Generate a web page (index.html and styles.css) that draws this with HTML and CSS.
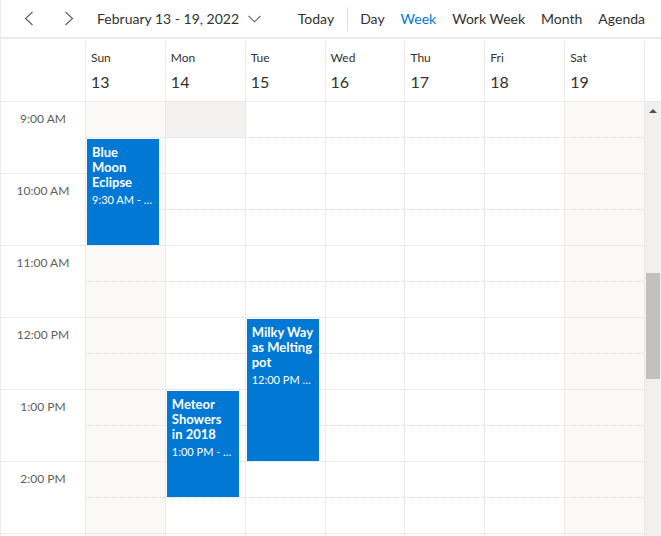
FILE: index.html
```html
<!DOCTYPE html>
<html lang="en">
<head>
<meta charset="utf-8">
<title>Scheduler - Week</title>
<link rel="stylesheet" href="styles.css">
</head>
<body>
<div class="scheduler">
  <div class="toolbar">
    <button class="nav-btn" aria-label="Previous">
      <svg width="10" height="15" viewBox="0 0 10 15"><polyline points="8.5,1 1.5,7.5 8.5,14" /></svg>
    </button>
    <button class="nav-btn" aria-label="Next">
      <svg width="10" height="15" viewBox="0 0 10 15"><polyline points="1.5,1 8.5,7.5 1.5,14" /></svg>
    </button>
    <button class="date-range">
      <span>February 13 - 19, 2022</span>
      <svg width="13" height="8" viewBox="0 0 13 8"><polyline points="0.5,0.8 6.5,6.8 12.5,0.8" /></svg>
    </button>
    <div class="spacer"></div>
    <button class="tb-item">Today</button>
    <div class="sep"></div>
    <div class="views">
      <button class="tb-item">Day</button>
      <button class="tb-item active">Week</button>
      <button class="tb-item">Work Week</button>
      <button class="tb-item">Month</button>
      <button class="tb-item">Agenda</button>
    </div>
  </div>

  <div class="header-row">
    <div class="corner"></div>
    <div class="day-head"><div class="dname">Sun</div><div class="dnum">13</div></div>
    <div class="day-head"><div class="dname">Mon</div><div class="dnum">14</div></div>
    <div class="day-head"><div class="dname">Tue</div><div class="dnum">15</div></div>
    <div class="day-head"><div class="dname">Wed</div><div class="dnum">16</div></div>
    <div class="day-head"><div class="dname">Thu</div><div class="dnum">17</div></div>
    <div class="day-head"><div class="dname">Fri</div><div class="dnum">18</div></div>
    <div class="day-head"><div class="dname">Sat</div><div class="dnum">19</div></div>
    <div class="gutter"></div>
  </div>

  <div class="content">
    <div class="time-col">
      <div class="time-cell">9:00 AM</div>
      <div class="time-cell">10:00 AM</div>
      <div class="time-cell">11:00 AM</div>
      <div class="time-cell">12:00 PM</div>
      <div class="time-cell">1:00 PM</div>
      <div class="time-cell">2:00 PM</div>
      <div class="time-cell"></div>
    </div>

    <div class="day-col weekend">
      <div class="half"></div><div class="half hour"></div>
      <div class="half"></div><div class="half hour"></div>
      <div class="half"></div><div class="half hour"></div>
      <div class="half"></div><div class="half hour"></div>
      <div class="half"></div><div class="half hour"></div>
      <div class="half"></div><div class="half hour"></div>
      <div class="half"></div><div class="half hour"></div>
      <div class="event" style="top:37px;height:106px">
        <div class="ev-subject">Blue Moon Eclipse</div>
        <div class="ev-time">9:30 AM - 11:00 AM</div>
      </div>
    </div>

    <div class="day-col">
      <div class="half selected"></div><div class="half hour"></div>
      <div class="half"></div><div class="half hour"></div>
      <div class="half"></div><div class="half hour"></div>
      <div class="half"></div><div class="half hour"></div>
      <div class="half"></div><div class="half hour"></div>
      <div class="half"></div><div class="half hour"></div>
      <div class="half"></div><div class="half hour"></div>
      <div class="event" style="top:289px;height:106px">
        <div class="ev-subject">Meteor Showers in 2018</div>
        <div class="ev-time">1:00 PM - 2:30 PM</div>
      </div>
    </div>

    <div class="day-col">
      <div class="half"></div><div class="half hour"></div>
      <div class="half"></div><div class="half hour"></div>
      <div class="half"></div><div class="half hour"></div>
      <div class="half"></div><div class="half hour"></div>
      <div class="half"></div><div class="half hour"></div>
      <div class="half"></div><div class="half hour"></div>
      <div class="half"></div><div class="half hour"></div>
      <div class="event" style="top:217px;height:142px">
        <div class="ev-subject">Milky Way as Melting pot</div>
        <div class="ev-time">12:00 PM - 2:00 PM</div>
      </div>
    </div>

    <div class="day-col">
      <div class="half"></div><div class="half hour"></div>
      <div class="half"></div><div class="half hour"></div>
      <div class="half"></div><div class="half hour"></div>
      <div class="half"></div><div class="half hour"></div>
      <div class="half"></div><div class="half hour"></div>
      <div class="half"></div><div class="half hour"></div>
      <div class="half"></div><div class="half hour"></div>
    </div>

    <div class="day-col">
      <div class="half"></div><div class="half hour"></div>
      <div class="half"></div><div class="half hour"></div>
      <div class="half"></div><div class="half hour"></div>
      <div class="half"></div><div class="half hour"></div>
      <div class="half"></div><div class="half hour"></div>
      <div class="half"></div><div class="half hour"></div>
      <div class="half"></div><div class="half hour"></div>
    </div>

    <div class="day-col">
      <div class="half"></div><div class="half hour"></div>
      <div class="half"></div><div class="half hour"></div>
      <div class="half"></div><div class="half hour"></div>
      <div class="half"></div><div class="half hour"></div>
      <div class="half"></div><div class="half hour"></div>
      <div class="half"></div><div class="half hour"></div>
      <div class="half"></div><div class="half hour"></div>
    </div>

    <div class="day-col weekend">
      <div class="half"></div><div class="half hour"></div>
      <div class="half"></div><div class="half hour"></div>
      <div class="half"></div><div class="half hour"></div>
      <div class="half"></div><div class="half hour"></div>
      <div class="half"></div><div class="half hour"></div>
      <div class="half"></div><div class="half hour"></div>
      <div class="half"></div><div class="half hour"></div>
    </div>

    <div class="scrollbar">
      <div class="sb-arrow"></div>
      <div class="sb-thumb"></div>
    </div>
  </div>
</div>
</body>
</html>
```

FILE: styles.css
```css
* {
  box-sizing: border-box;
}

html, body {
  margin: 0;
  padding: 0;
  background: #ffffff;
}

body {
  font-family: Lato, "Open Sans", "Liberation Sans", sans-serif;
  color: #323130;
}

button {
  font: inherit;
  color: inherit;
  background: none;
  border: 0;
  padding: 0;
  margin: 0;
  cursor: pointer;
}

.scheduler {
  width: 661px;
  height: 536px;
  overflow: hidden;
  display: flex;
  flex-direction: column;
  border-left: 1px solid #edebe9;
}

/* ---------- toolbar ---------- */
.toolbar {
  flex: none;
  height: 39px;
  display: flex;
  align-items: center;
  border-bottom: 2px solid #ebebeb;
  padding: 0 16px 0 8px;
}

.nav-btn {
  width: 40px;
  height: 30px;
  display: flex;
  align-items: center;
  justify-content: center;
}

.nav-btn svg polyline,
.date-range svg polyline {
  fill: none;
  stroke: #605e5c;
  stroke-width: 1.1;
}

.date-range {
  margin-left: 8px;
  display: flex;
  align-items: center;
  gap: 9px;
  font-size: 14px;
  height: 30px;
}

.spacer {
  flex: 1;
}

.tb-item {
  font-size: 14px;
  height: 30px;
  line-height: 30px;
  color: #323130;
}

.tb-item.active {
  color: #0078d4;
}

.sep {
  width: 1px;
  height: 24px;
  background: #e1dfdd;
  margin: 0 12px 0 13px;
}

.views {
  display: flex;
  align-items: center;
  gap: 16px;
}

/* ---------- date header ---------- */
.header-row {
  flex: none;
  display: flex;
  height: 63px;
  padding-top: 2px;
  border-bottom: 1px solid #edebe9;
}

.corner {
  width: 85px;
  flex: none;
  border-right: 1px solid #edebe9;
}

.day-head {
  flex: 1;
  min-width: 0;
  border-right: 1px solid #edebe9;
  padding: 9px 0 0 5px;
}

.dname {
  font-size: 12px;
  line-height: 16px;
  color: #323130;
}

.dnum {
  margin-top: 6px;
  font-size: 16px;
  line-height: 20px;
  color: #323130;
}

.gutter {
  width: 16px;
  flex: none;
}

/* ---------- content ---------- */
.content {
  flex: 1;
  display: flex;
  min-height: 0;
  overflow: hidden;
}

.time-col {
  width: 85px;
  flex: none;
  border-right: 1px solid #edebe9;
}

.time-cell {
  height: 72px;
  border-bottom: 1px solid #edebe9;
  text-align: center;
  font-size: 12px;
  line-height: 16px;
  padding-top: 9px;
  color: #605e5c;
}

.day-col {
  flex: 1;
  min-width: 0;
  position: relative;
  border-right: 1px solid #edebe9;
}

.day-col.weekend {
  background: #faf9f8;
}

.half {
  height: 36px;
  border-bottom: 1px dotted #e1dfdd;
}

.half.hour {
  border-bottom: 1px solid #edebe9;
}

.half.selected {
  background: #f3f2f1;
}

.event {
  position: absolute;
  left: 1px;
  right: 6px;
  background: #0078d4;
  color: #ffffff;
  padding: 6px 5px 0 5px;
  overflow: hidden;
}

.ev-subject {
  font-size: 13px;
  font-weight: 700;
  line-height: 15px;
}

.ev-time {
  margin-top: 3px;
  font-size: 11px;
  line-height: 14px;
  white-space: nowrap;
  overflow: hidden;
  text-overflow: ellipsis;
}

/* ---------- scrollbar ---------- */
.scrollbar {
  width: 16px;
  flex: none;
  background: #f0f0f0;
  display: flex;
  flex-direction: column;
}

.sb-arrow {
  height: 17px;
  flex: none;
  display: flex;
  align-items: center;
  justify-content: center;
}

.sb-arrow::before {
  content: "";
  width: 0;
  height: 0;
  border-left: 4px solid transparent;
  border-right: 4px solid transparent;
  border-bottom: 4px solid #505050;
}

.sb-thumb {
  margin: 154px 1px 0 1px;
  height: 106px;
  background: #c1c1c1;
}
```
